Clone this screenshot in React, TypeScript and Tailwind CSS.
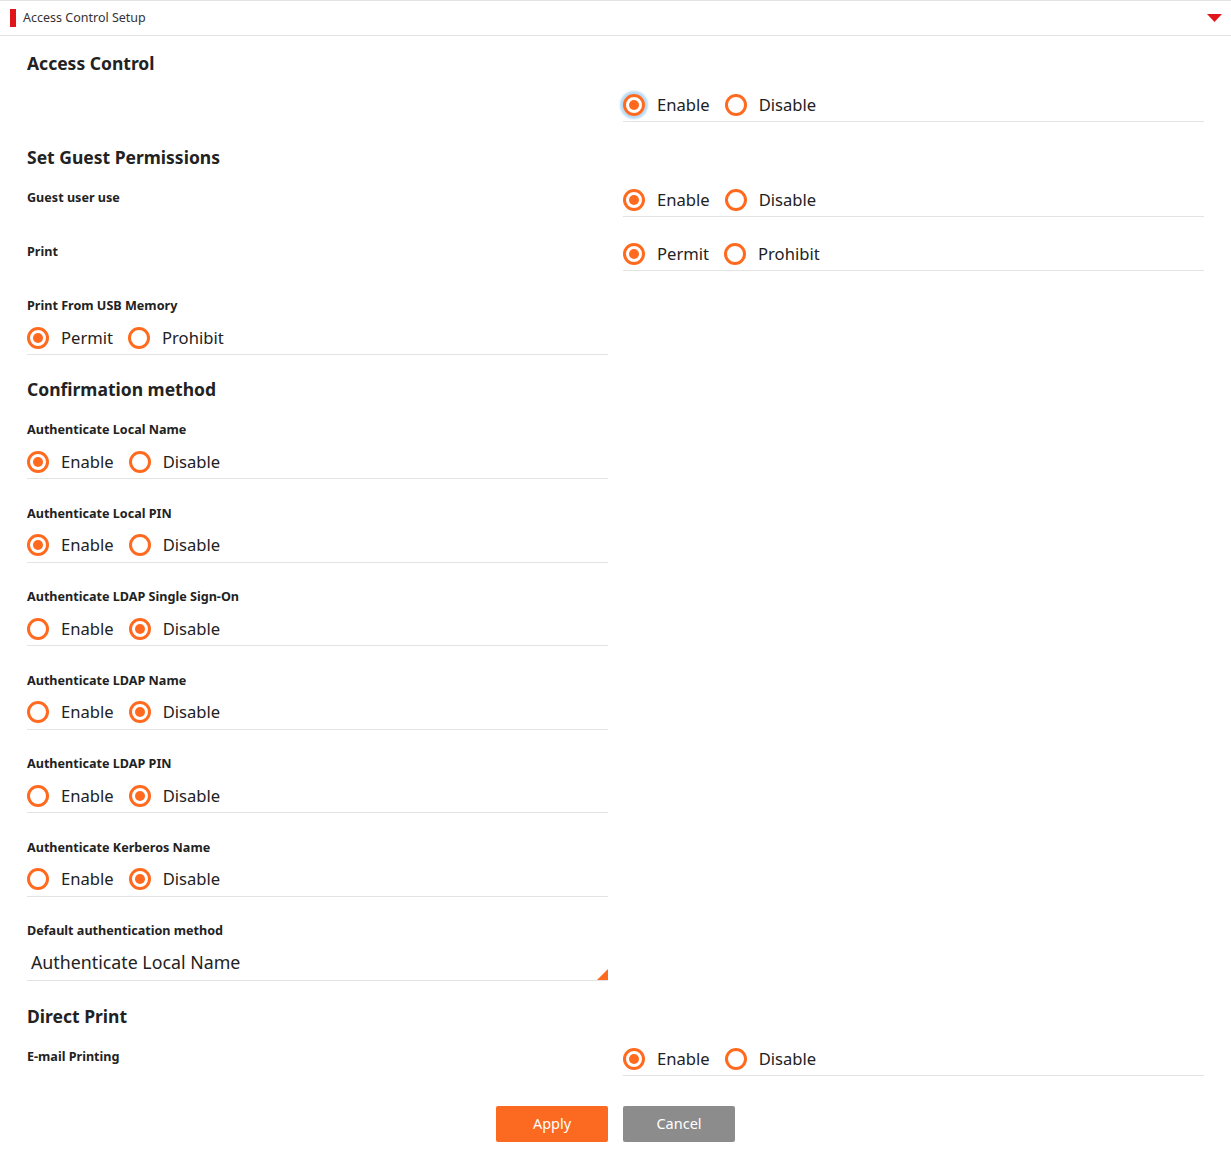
import React, { useState } from 'react';

const ORANGE = '#ff6a1f';

type Opt = { label: string; value: string };

function Radio({ checked, focus, label, onClick }: { checked: boolean; focus?: boolean; label: string; onClick: () => void }) {
  return (
    <label className="flex items-center cursor-pointer mr-[15px]" onClick={onClick}>
      <span
        className={`flex items-center justify-center w-[22px] h-[22px] rounded-full border-[3px] border-[#ff6a1f] bg-white ${
          focus ? 'shadow-[0_0_2px_3px_#b9dbf7]' : ''
        }`}
      >
        {checked && <span className="block w-[10px] h-[10px] rounded-full bg-[#ff6a1f]" />}
      </span>
      <span className="ml-[12px] text-[16.6px] text-[#222]">{label}</span>
    </label>
  );
}

function RadioRow({ options, initial, focus }: { options: Opt[]; initial: string; focus?: boolean }) {
  const [value, setValue] = useState(initial);
  return (
    <div className="flex items-center h-[33px] border-b border-[#e3e3e3]">
      {options.map((o) => (
        <Radio
          key={o.value}
          label={o.label}
          checked={value === o.value}
          focus={focus && value === o.value}
          onClick={() => setValue(o.value)}
        />
      ))}
    </div>
  );
}

const enableOpts: Opt[] = [
  { label: 'Enable', value: 'on' },
  { label: 'Disable', value: 'off' },
];
const permitOpts: Opt[] = [
  { label: 'Permit', value: 'on' },
  { label: 'Prohibit', value: 'off' },
];

function Heading({ children }: { children: React.ReactNode }) {
  return <h2 className="text-[17.5px] leading-[26px] font-bold text-[#222]">{children}</h2>;
}

function Label({ children }: { children: React.ReactNode }) {
  return <div className="text-[12.6px] leading-[18px] pt-[1px] font-bold text-[#222]">{children}</div>;
}

function StackedItem({ label, opts, initial }: { label: string; opts: Opt[]; initial: string }) {
  return (
    <div className="w-[581px]">
      <Label>{label}</Label>
      <div className="mt-[7px]">
        <RadioRow options={opts} initial={initial} />
      </div>
    </div>
  );
}

function SideItem({ label, opts, initial, focus }: { label?: string; opts: Opt[]; initial: string; focus?: boolean }) {
  return (
    <div className="grid grid-cols-[581px_581px] gap-x-[15px]">
      <div className="pt-[4px]">{label && <Label>{label}</Label>}</div>
      <RadioRow options={opts} initial={initial} focus={focus} />
    </div>
  );
}

export default function App() {
  return (
    <div className="w-[1231px] bg-white pb-[14px]" style={{ fontFamily: '"Noto Sans", "Noto Sans CJK JP", sans-serif' }}>
      {/* header bar */}
      <div className="flex items-center h-[36px] border-t border-b border-[#e3e3e3] pl-[10px] pr-[9px]">
        <span className="block w-[6px] h-[18px] bg-[#e0161b]" />
        <span className="ml-[7px] text-[12.5px] text-[#333]">Access Control Setup</span>
        <svg className="ml-auto" width="15" height="8" viewBox="0 0 15 8">
          <polygon points="0,0 15,0 7.5,8" fill="#e0161b" />
        </svg>
      </div>

      <div className="px-[27px]">
        <div className="pt-[14px]">
          <Heading>Access Control</Heading>
        </div>
        <div className="mt-[13px]">
          <SideItem opts={enableOpts} initial="on" focus />
        </div>

        <div className="mt-[22px]">
          <Heading>Set Guest Permissions</Heading>
        </div>
        <div className="mt-[14px]">
          <SideItem label="Guest user use" opts={enableOpts} initial="on" />
        </div>
        <div className="mt-[21px]">
          <SideItem label="Print" opts={permitOpts} initial="on" />
        </div>
        <div className="mt-[25px]">
          <StackedItem label="Print From USB Memory" opts={permitOpts} initial="on" />
        </div>

        <div className="mt-[21px]">
          <Heading>Confirmation method</Heading>
        </div>
        <div className="mt-[18px] flex flex-col gap-y-[24.5px]">
          <StackedItem label="Authenticate Local Name" opts={enableOpts} initial="on" />
          <StackedItem label="Authenticate Local PIN" opts={enableOpts} initial="on" />
          <StackedItem label="Authenticate LDAP Single Sign-On" opts={enableOpts} initial="off" />
          <StackedItem label="Authenticate LDAP Name" opts={enableOpts} initial="off" />
          <StackedItem label="Authenticate LDAP PIN" opts={enableOpts} initial="off" />
          <StackedItem label="Authenticate Kerberos Name" opts={enableOpts} initial="off" />
          <div className="w-[581px]">
            <Label>Default authentication method</Label>
            <div className="relative mt-[7px] flex items-center h-[34px] border-b border-[#e3e3e3] pl-[4px] pb-[2px]">
              <span className="text-[17.8px] text-[#222]">Authenticate Local Name</span>
              <svg className="absolute right-0 bottom-0" width="11" height="11" viewBox="0 0 11 11">
                <polygon points="11,0 11,11 0,11" fill={ORANGE} />
              </svg>
            </div>
          </div>
        </div>

        <div className="mt-[22px]">
          <Heading>Direct Print</Heading>
        </div>
        <div className="mt-[14px]">
          <SideItem label="E-mail Printing" opts={enableOpts} initial="on" />
        </div>

        <div className="mt-[30px] flex justify-center gap-x-[15px] -mx-[27px]">
          <button className="w-[112px] h-[36px] rounded-[2px] bg-[#fc6a21] text-white text-[14.5px]">Apply</button>
          <button className="w-[112px] h-[36px] rounded-[2px] bg-[#8c8c8c] text-white text-[14.5px]">Cancel</button>
        </div>
      </div>
    </div>
  );
}
